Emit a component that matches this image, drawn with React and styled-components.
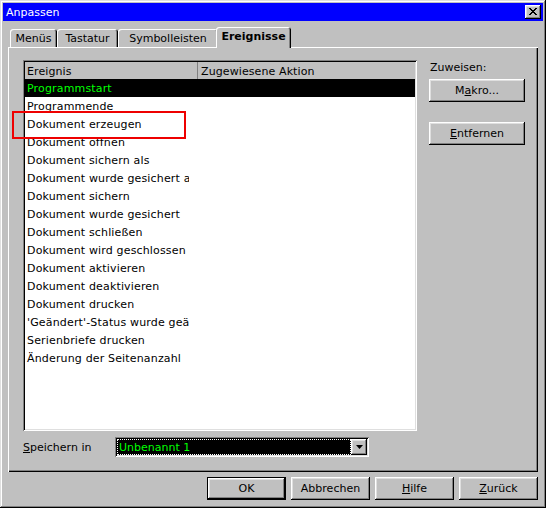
import React from "react";
import styled, { createGlobalStyle } from "styled-components";

const Global = createGlobalStyle`
  html, body { margin: 0; padding: 0; background: #c0c0c0; }
  * { box-sizing: border-box; }
`;

const FACE = "#c0c0c0";
const raised =
  "inset -1px -1px #000, inset 1px 1px #fff, inset -2px -2px #808080, inset 2px 2px #dfdfdf";
const sunken =
  "inset 1px 1px #808080, inset -1px -1px #fff, inset 2px 2px #000, inset -2px -2px #dfdfdf";

const Window = styled.div`
  position: relative;
  width: 546px;
  height: 508px;
  padding: 3px;
  background: ${FACE};
  box-shadow: inset -1px -1px #000, inset 1px 1px #dfdfdf, inset -2px -2px #808080,
    inset 2px 2px #fff;
  display: flex;
  flex-direction: column;
  font-family: "DejaVu Sans", "Liberation Sans", sans-serif;
  font-size: 11px;
  color: #000;
`;

const TitleBar = styled.div`
  height: 18px;
  background: #0000ff;
  color: #fff;
  display: flex;
  align-items: center;
  justify-content: space-between;
  padding: 0 2px 0 3px;
`;

const CloseButton = styled.div`
  width: 16px;
  height: 14px;
  background: ${FACE};
  box-shadow: ${raised};
  display: flex;
  align-items: center;
  justify-content: center;
  padding-bottom: 1px;
`;

const TabStrip = styled.div`
  display: flex;
  align-items: flex-end;
  height: 20px;
  margin: 6px 5px 0;
  padding-left: 2px;
`;

const Tab = styled.div`
  position: relative;
  z-index: ${(p) => (p.$active ? 1 : 0)};
  width: ${(p) => p.$w}px;
  height: ${(p) => (p.$active ? 21 : 18)}px;
  margin: ${(p) => (p.$active ? "0 -2px -1px" : "0")};
  background: ${FACE};
  border-radius: 3px 3px 0 0;
  box-shadow: inset 1px 1px #fff, inset -1px 0 #000, inset -2px 0 #808080;
  display: flex;
  align-items: center;
  justify-content: center;
  padding-bottom: ${(p) => (p.$active ? 2 : 0)}px;
  font-weight: ${(p) => (p.$active ? "bold" : "normal")};
`;

const Panel = styled.div`
  height: 425px;
  margin: 0 5px;
  padding: 13px 13px 0 15px;
  background: ${FACE};
  box-shadow: inset 1px 1px #fff, inset -1px -1px #000, inset -2px -2px #808080;
  display: grid;
  grid-template-columns: 394px 96px;
  grid-template-rows: 371px 20px;
  column-gap: 12px;
  row-gap: 6px;
`;

const ListBox = styled.div`
  background: #fff;
  box-shadow: ${sunken};
  padding: 2px;
  display: flex;
  flex-direction: column;
  overflow: hidden;
`;

const Header = styled.div`
  display: flex;
  height: 17px;
  background: ${FACE};
  flex-shrink: 0;
`;

const HeaderCell = styled.div`
  display: flex;
  align-items: center;
  width: ${(p) => (p.$w ? `${p.$w}px` : "auto")};
  flex: ${(p) => (p.$w ? "none" : "1")};
  padding: 1px 0 0 ${(p) => (p.$first ? 2 : 3)}px;
  border-right: ${(p) => (p.$first ? "1px solid #808080" : "none")};
  letter-spacing: 0.1px;
  white-space: nowrap;
`;

const Row = styled.div`
  height: 18px;
  display: flex;
  align-items: center;
  flex-shrink: 0;
  padding-top: 1px;
  background: ${(p) => (p.$selected ? "#000" : "#fff")};
  color: ${(p) => (p.$selected ? "#00ff00" : "#000")};
`;

const EventCell = styled.span`
  display: block;
  width: 164px;
  padding-left: 2px;
  overflow: hidden;
  white-space: nowrap;
  letter-spacing: 0.16px;
`;

const SideColumn = styled.div`
  display: flex;
  flex-direction: column;
  align-items: flex-start;
  padding-top: 1px;
`;

const SideLabel = styled.div`
  height: 13px;
  line-height: 13px;
  margin-left: 1px;
  margin-bottom: 5px;
`;

const Button = styled.button`
  width: ${(p) => p.$w}px;
  height: 23px;
  margin: 0;
  margin-bottom: ${(p) => p.$mb || 0}px;
  padding: 0;
  border: ${(p) => (p.$default ? "1px solid #000" : "none")};
  background: ${FACE};
  box-shadow: ${raised};
  font: inherit;
  color: #000;
  display: flex;
  align-items: center;
  justify-content: center;
  cursor: default;
  u {
    text-decoration: underline;
  }
`;

const SaveRow = styled.div`
  display: flex;
  align-items: center;
`;

const SaveLabel = styled.div`
  width: 92px;
`;

const Combo = styled.div`
  width: 254px;
  height: 20px;
  padding: 2px;
  background: #fff;
  box-shadow: ${sunken};
  display: flex;
`;

const ComboValue = styled.div`
  flex: 1;
  background: #000;
  color: #00ff00;
  border: 1px dotted #fff;
  padding: 1px 0 0 1px;
  display: flex;
  align-items: center;
  white-space: nowrap;
`;

const DropButton = styled.div`
  width: 16px;
  height: 16px;
  background: ${FACE};
  box-shadow: ${raised};
  display: flex;
  align-items: center;
  justify-content: center;
`;

const Footer = styled.div`
  display: flex;
  justify-content: flex-end;
  gap: 5px;
  margin-top: 5px;
  padding-right: 5px;
`;

const Marker = styled.div`
  position: absolute;
  left: 12px;
  top: 111px;
  width: 174px;
  height: 28px;
  border: 2px solid #ee0000;
  pointer-events: none;
`;

const events = [
  "Programmstart",
  "Programmende",
  "Dokument erzeugen",
  "Dokument öffnen",
  "Dokument sichern als",
  "Dokument wurde gesichert als",
  "Dokument sichern",
  "Dokument wurde gesichert",
  "Dokument schließen",
  "Dokument wird geschlossen",
  "Dokument aktivieren",
  "Dokument deaktivieren",
  "Dokument drucken",
  "'Geändert'-Status wurde geändert",
  "Serienbriefe drucken",
  "Änderung der Seitenanzahl",
];

const tabs = [
  { label: "Menüs", w: 47 },
  { label: "Tastatur", w: 61 },
  { label: "Symbolleisten", w: 100 },
  { label: "Ereignisse", w: 75, active: true },
];

export default function App() {
  return (
    <>
      <Global />
      <Window>
        <TitleBar>
          <span>Anpassen</span>
          <CloseButton>
            <svg width="8" height="7" viewBox="0 0 8 7" shapeRendering="crispEdges">
              <path
                d="M0 0h2v1h1v1h2v-1h1v-1h2v1h-1v1h-1v1h-1v1h1v1h1v1h1v1h-2v-1h-1v-1h-2v1h-1v1h-2v-1h1v-1h1v-1h1v-1h-1v-1h-1z"
                fill="#000"
              />
            </svg>
          </CloseButton>
        </TitleBar>

        <TabStrip>
          {tabs.map((t) => (
            <Tab key={t.label} $w={t.w} $active={t.active}>
              {t.label}
            </Tab>
          ))}
        </TabStrip>

        <Panel>
          <ListBox>
            <Header>
              <HeaderCell $first $w={173}>
                Ereignis
              </HeaderCell>
              <HeaderCell>Zugewiesene Aktion</HeaderCell>
            </Header>
            {events.map((e, i) => (
              <Row key={e} $selected={i === 0}>
                <EventCell>{e}</EventCell>
              </Row>
            ))}
          </ListBox>

          <SideColumn>
            <SideLabel>Zuweisen:</SideLabel>
            <Button $w={96} $mb={20}>
              M<u>a</u>kro...
            </Button>
            <Button $w={96}>
              <u>E</u>ntfernen
            </Button>
          </SideColumn>

          <SaveRow>
            <SaveLabel>
              <u>S</u>peichern in
            </SaveLabel>
            <Combo>
              <ComboValue>Unbenannt 1</ComboValue>
              <DropButton>
                <svg width="7" height="4" viewBox="0 0 7 4">
                  <path d="M0 0h7L3.5 4z" fill="#000" />
                </svg>
              </DropButton>
            </Combo>
          </SaveRow>
        </Panel>

        <Footer>
          <Button $w={79} $default>
            OK
          </Button>
          <Button $w={79}>Abbrechen</Button>
          <Button $w={79}>
            <u>H</u>ilfe
          </Button>
          <Button $w={79}>
            <u>Z</u>urück
          </Button>
        </Footer>

        <Marker />
      </Window>
    </>
  );
}
